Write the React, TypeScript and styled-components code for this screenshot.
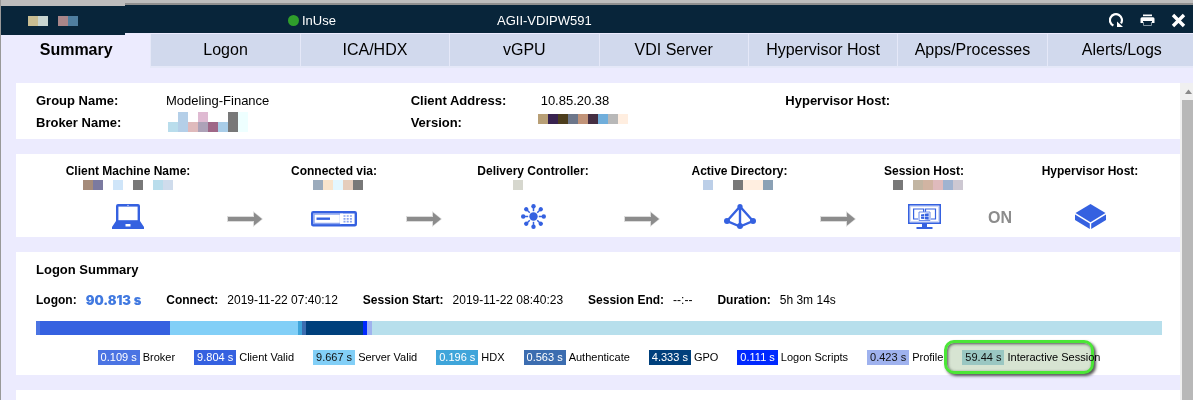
import React from "react";
import styled, { createGlobalStyle } from "styled-components";

const GlobalStyle = createGlobalStyle`
  * { box-sizing: border-box; }
  body {
    margin: 0;
    background: #ecebfe;
    color: #000;
    font-family: "Liberation Sans", Arial, sans-serif;
    font-size: 13px;
  }
`;

const Page = styled.div`
  display: flex;
  flex-direction: column;
  height: 100vh;
  overflow: hidden;
  border-left: 1px solid #999;
`;

const Header = styled.header`
  display: grid;
  flex: none;
  grid-template-columns: 125fr 163fr 209fr 696fr;
  height: 33px;
  margin-left: -1px;
  border-top: 3px solid #bdbdbd;
  background: #08253a;
  box-shadow: inset 0 2px #8f8f8f;
  color: #fff;
`;

const Brand = styled.div`
  position: relative;
  height: 32px;
  border-top: 3px solid #bdbdbd;
  background: #08253a;
`;

const HeaderCell = styled.div`
  display: flex;
  align-items: center;
  justify-content: flex-start;
  padding-top: 3px;
`;

const Status = styled(HeaderCell)`
  grid-column: 3;
  gap: 3px;
`;

const StatusDot = styled.span`
  width: 11px;
  height: 11px;
  border-radius: 50%;
  background: #2f9e2b;
`;

const Session = styled(HeaderCell)`
  justify-content: space-between;
  padding-right: 7px;
`;

const Actions = styled.div`
  display: flex;
  gap: 16px;
`;

const IconButton = styled.button`
  display: block;
  width: 15px;
  height: 15px;
  padding: 0;
  border: 0;
  background: none;
  color: #fff;
  cursor: pointer;
  svg { display: block; }
`;

const TabBar = styled.nav`
  display: grid;
  flex: none;
  grid-template-columns: repeat(8, 1fr);
  margin-right: -3px;
  padding-top: 1px;
  border-bottom: 2px solid #e5e8f8;
`;

const Tab = styled.button<{ $active?: boolean }>`
  height: ${(p) => (p.$active ? "34px" : "32px")};
  padding: 0 0 ${(p) => (p.$active ? "2px" : "0")};
  border: 0;
  border-left: 1px solid ${(p) => (p.$active ? "#ecebfe" : "#e5e8f8")};
  background: ${(p) => (p.$active ? "#ecebfe" : "#d1d9ed")};
  color: #000;
  font: ${(p) => (p.$active ? "bold" : "normal")} 16px/32px "Liberation Sans", Arial, sans-serif;
  margin-bottom: ${(p) => (p.$active ? "-2px" : "0")};
  cursor: pointer;
`;

const Body = styled.div`
  display: flex;
  flex: 1;
  min-height: 0;
  padding: 15px 0 0 15px;
`;

const Cards = styled.main`
  display: flex;
  flex: 1;
  flex-direction: column;
  gap: 15px;
  min-width: 0;
`;

const Card = styled.section`
  flex: none;
  background: #fff;
`;

const NextCard = styled(Card)`
  flex: 1 0 10px;
`;

const InfoCard = styled(Card)`
  display: grid;
  grid-template-columns: repeat(3, 1fr);
  padding: 7px 20px 5px;
`;

const InfoList = styled.dl`
  display: grid;
  grid-template-columns: 130px 1fr;
  grid-auto-rows: 22px;
  margin: 0;
  line-height: 22px;
`;

const Term = styled.dt`
  font-weight: bold;
`;

const Detail = styled.dd`
  position: relative;
  margin: 0;
`;

const Redaction = styled.span<{ $x: number; $y: number; $cols: number }>`
  position: absolute;
  left: ${(p) => p.$x}px;
  top: ${(p) => p.$y}px;
  display: grid;
  grid-template-columns: repeat(${(p) => p.$cols}, 10px);
  grid-auto-rows: 10px;
`;

const Block = styled.span<{ $color: string }>`
  background: ${(p) => p.$color};
`;

const PathCard = styled(Card)`
  display: grid;
  grid-template-columns: 162fr 71fr 108fr 71fr 148fr 69fr 127fr 69fr 104fr 48fr 132fr;
  padding: 9px 24px 8px 31px;
`;

const Node = styled.div`
  position: relative;
  display: flex;
  flex-direction: column;
  align-items: center;
  justify-content: space-between;
  height: 66px;
  font-size: 12px;
  font-weight: bold;
  line-height: 16px;
  white-space: nowrap;
  svg { display: block; }
`;

const Link = styled.div`
  display: flex;
  align-items: flex-end;
  justify-content: center;
  height: 66px;
  padding-bottom: 2px;
  color: #8c8c8c;
  font-size: 16px;
  font-weight: bold;
  line-height: 18px;
`;

const LogonCard = styled(Card)`
  padding: 8px 18px 10px 20px;
`;

const Title = styled.h2`
  margin: 0;
  font-size: 13px;
  line-height: 20px;
`;

const Times = styled.dl`
  display: flex;
  gap: 25px;
  margin: 10px 0 11px;
  font-size: 12px;
  line-height: 20px;
`;

const Time = styled.div`
  display: flex;
  gap: 9px;
`;

const Total = styled(Detail)`
  color: #4179e0;
  font-family: Inter, "Liberation Sans", sans-serif;
  font-size: 13px;
  font-weight: 900;
`;

const Bar = styled.div`
  display: flex;
  height: 14px;
`;

const Segment = styled.span<{ $size: number; $color: string }>`
  flex: ${(p) => p.$size} 0 0;
  background: ${(p) => p.$color};
`;

const Legend = styled.ul`
  display: flex;
  justify-content: center;
  gap: 19px;
  margin: 15px 0 0;
  padding: 0;
  list-style: none;
  font-size: 11px;
  line-height: 15px;
  white-space: nowrap;
`;

const LegendItem = styled.li`
  position: relative;
  display: flex;
  gap: 3px;
`;

const Chip = styled.span<{ $color: string; $dark?: boolean }>`
  padding: 0 3px;
  background: ${(p) => p.$color};
  color: ${(p) => (p.$dark ? "#111" : "#fff")};
`;

const Highlight = styled.span`
  position: absolute;
  top: -10px;
  right: 6px;
  bottom: -9px;
  left: -18px;
  border: 3px solid #4be637;
  border-radius: 10px;
  background: #d7e4d2;
  box-shadow: 2px 2px 3px #555, inset 1px 1px 3px #555;
  mix-blend-mode: multiply;
`;

const Scrollbar = styled.div`
  flex: none;
  width: 13px;
  padding-left: 2px;
  background: #f0f0f0;
  display: flex;
  flex-direction: column;
`;

const ScrollArrow = styled.svg`
  display: block;
  flex: none;
`;

const Thumb = styled.div`
  flex: 1;
  background: #b8b8b8;
`;

type Mask = { x: number; y: number; rows: string[][] };
const _ = "transparent";

function Redacted({ x, y, rows }: Mask) {
  return (
    <Redaction $x={x} $y={y} $cols={rows[0].length} aria-hidden="true">
      {rows.flat().map((c, i) => (
        <Block key={i} $color={c} />
      ))}
    </Redaction>
  );
}

const BLUE = "#3561e0";

const Refresh = () => (
  <svg width="15" height="15" viewBox="0 0 15 15" aria-hidden="true">
    <path d="M4.4 12.6A6 6 0 1 1 12 10.400" fill="none" stroke="currentColor" strokeWidth="2.2" />
    <path d="M8 8.6V14h6z" fill="currentColor" />
  </svg>
);

const Print = () => (
  <svg width="15" height="15" viewBox="0 0 15 15" aria-hidden="true">
    <path d="M3 1.500h9v1.700H3z" fill="currentColor" />
    <path d="M2 4.200h11q1.500 0 1.500 1.500V10H12V8H3v2H.5V5.700q0-1.500 1.500-1.500z" fill="currentColor" />
    <path d="M3.5 9v3.5h8V9" fill="none" stroke="#8496a3" strokeWidth="1" />
  </svg>
);

const Close = () => (
  <svg width="15" height="15" viewBox="0 0 15 15" aria-hidden="true">
    <path d="M2 2l11 11M13 2L2 13" stroke="currentColor" strokeWidth="3.4" />
  </svg>
);

const Arrow = () => (
  <svg width="36" height="16" viewBox="0 0 36 16" aria-hidden="true">
    <path d="M0 5h26V0l10 8-10 8v-5H0z" fill="#c4c4c4" opacity=".6" />
    <path d="M1 6h26V1.5L35 8l-8 6.5V10H1z" fill="#8c8c8c" />
  </svg>
);

const Laptop = () => (
  <svg width="32" height="25" viewBox="0 0 32 25" aria-hidden="true">
    <path d="M6 0h20q2 0 2 2v15l4 6v2H0v-2l4-6V2q0-2 2-2z" fill={BLUE} />
    <path d="M6.400 2.600h19.200v13.600H6.400z" fill="#fff" />
    <path d="M13.5 20h5v2.5h-5z" fill="#fff" />
    <path d="M15 1.4h2" stroke="#9fb2ee" />
  </svg>
);

const Gateway = () => (
  <svg width="46" height="25" viewBox="0 0 46 25" aria-hidden="true">
    <rect x="1.200" y="8.200" width="43.600" height="13" rx="1" fill="#fff" stroke={BLUE} strokeWidth="2.400" />
    <path d="M3 10h26.500v9.500H3z" fill="none" stroke="#8ba4ee" strokeWidth="1.400" />
    <path d="M29 9.600h3v10.300h-3z" fill="#fff" />
    <path d="M5.500 14.700h13.500" stroke={BLUE} strokeWidth="2.400" />
    <path d="M32.500 12h9M32.500 14.800h9M32.500 17.600h9" stroke="#8ba4ee" strokeWidth="1.700" strokeDasharray="2 1.200" />
  </svg>
);

const Controller = () => (
  <svg width="25" height="25" viewBox="0 0 25 25" aria-hidden="true">
    <circle cx="12.5" cy="12.5" r="4.200" fill={BLUE} />
    {[0, 45, 90, 135, 180, 225, 270, 315].map((a) => (
      <g key={a} transform={`rotate(${a} 12.5 12.5)`}>
        <circle cx="12.5" cy="2.200" r="2.200" fill={BLUE} />
        <path d="M12.5 2v5.200" stroke={BLUE} strokeWidth="1.500" />
      </g>
    ))}
  </svg>
);

const Directory = () => (
  <svg width="32" height="25" viewBox="0 0 32 25" aria-hidden="true">
    <path d="M16 2.5L3 17l13 5.5L29 17zM16 2.5v20" fill="none" stroke={BLUE} strokeWidth="2.400" />
    <g fill={BLUE}>
      <circle cx="16" cy="2.600" r="2.600" />
      <circle cx="3" cy="17" r="3" />
      <circle cx="29" cy="17" r="3" />
      <circle cx="16" cy="22" r="3" />
    </g>
  </svg>
);

const Host = () => (
  <svg width="33" height="25" viewBox="0 0 33 25" aria-hidden="true">
    <rect x=".8" y=".8" width="31.4" height="18.4" fill="#fff" stroke={BLUE} strokeWidth="1.6" />
    <rect x="2.5" y="2.5" width="28" height="15" fill="none" stroke="#c5d0f6" strokeWidth=".8" />
    <path d="M10 15H5.6V5h10v3M17.5 8V5h10v10H23" fill="none" stroke={BLUE} strokeWidth="1.2" />
    <path d="M11 8h11v8.5H11z" fill="#fff" stroke="#6d8cea" strokeWidth="1" />
    <path d="M13 10.4l3-.5v2.3h-3zM16.7 9.8l4-.6v3h-4zM13 12.8h3v2.3l-3-.4zM16.7 12.8h4v3l-4-.6z" fill={BLUE} />
    <path d="M14 19.5h5V23h5.500v2H8.500v-2H14z" fill={BLUE} />
  </svg>
);

const Hypervisor = () => (
  <svg width="31" height="25" viewBox="0 0 31 25" aria-hidden="true">
    <path d="M15.500 0L30.500 9 15.500 18.200 .5 9z" fill={BLUE} />
    <path d="M0 10.400l14.800 9V25L0 16zM31 10.400l-14.800 9V25L31 16z" fill={BLUE} />
  </svg>
);

const nodes = [
  { name: "Client Machine Name:", icon: <Laptop />, x: 36, cells: ["#a58b7a", "#7b7aa0", _, "#cfe5f9", _, "#787878", _, "#b9ddec", "#cfdcec"] },
  { name: "Connected via:", icon: <Gateway />, x: 33, cells: ["#9babbc", "#f8e4cc", "#e3f7ff", "#e5cdbc", "#787878"] },
  { name: "Delivery Controller:", icon: <Controller />, x: 54, cells: ["#d6d7ce"] },
  { name: "Active Directory:", icon: <Directory />, x: 27, cells: ["#bccfe8", _, _, "#787878", "#ffeee0", "#ffeee0", "#8ba1b5"] },
  { name: "Session Host:", icon: <Host />, x: 21, cells: ["#787878", _, "#c2b5a2", "#d1b4a2", "#dfbabc", "#a0b3d0", "#cdc8d2"] },
  { name: "Hypervisor Host:", icon: <Hypervisor />, x: 0, cells: [] as string[] },
];

const phases = [
  { time: "0.109 s", name: "Broker", color: "#4b74e3", size: 4 },
  { time: "9.804 s", name: "Client Valid", color: "#3561e0", size: 130 },
  { time: "9.667 s", name: "Server Valid", color: "#82cff7", size: 128, dark: true },
  { time: "0.196 s", name: "HDX", color: "#3fa5da", size: 4 },
  { time: "0.563 s", name: "Authenticate", color: "#3c6db0", size: 4 },
  { time: "4.333 s", name: "GPO", color: "#00407c", size: 57 },
  { time: "0.111 s", name: "Logon Scripts", color: "#0029ff", size: 4 },
  { time: "0.423 s", name: "Profile", color: "#9fb2ee", size: 5, dark: true },
  { time: "59.44 s", name: "Interactive Session", color: "#b7dfec", size: 790, dark: true, marked: true },
];

const times = [
  ["Connect:", "2019-11-22 07:40:12"],
  ["Session Start:", "2019-11-22 08:40:23"],
  ["Session End:", "--:--"],
  ["Duration:", "5h 3m 14s"],
];

const tabs = ["Summary", "Logon", "ICA/HDX", "vGPU", "VDI Server", "Hypervisor Host", "Apps/Processes", "Alerts/Logs"];

export default function App() {
  return (
    <>
      <GlobalStyle />
      <Page>
        <Header>
          <Brand>
            <Redacted x={28} y={10} rows={[["#c8bd92", "#c8d5d0", _, "#a98689", "#4f7e9f"]]} />
          </Brand>
          <Status>
            <StatusDot />
            InUse
          </Status>
          <Session>
            AGII-VDIPW591
            <Actions>
              <IconButton aria-label="Refresh"><Refresh /></IconButton>
              <IconButton aria-label="Print"><Print /></IconButton>
              <IconButton aria-label="Close"><Close /></IconButton>
            </Actions>
          </Session>
        </Header>
        <TabBar>
          {tabs.map((t, i) => (
            <Tab key={t} $active={i === 0}>{t}</Tab>
          ))}
        </TabBar>
        <Body>
          <Cards>
            <InfoCard>
              <InfoList>
                <Term>Group Name:</Term>
                <Detail>Modeling-Finance</Detail>
                <Term>Broker Name:</Term>
                <Detail>
                  <Redacted
                    x={2}
                    y={0}
                    rows={[
                      [_, "#b4cfe8", _, "#dfbad2", _, _, "#787878", "#eeffff"],
                      ["#b9ddec", "#b4cfe8", "#dfbabc", "#ada2b8", "#9f6787", "#a9cde8", "#787878", "#eeffff"],
                    ]}
                  />
                </Detail>
              </InfoList>
              <InfoList>
                <Term>Client Address:</Term>
                <Detail>10.85.20.38</Detail>
                <Term>Version:</Term>
                <Detail>
                  <Redacted
                    x={-3}
                    y={2}
                    rows={[["#b89f76", "#392350", "#4d3e1d", "#6d778b", "#c19378", "#452e42", "#70aedb", "#b8b8b8", "#ffeee0"]]}
                  />
                </Detail>
              </InfoList>
              <InfoList>
                <Term>Hypervisor Host:</Term>
                <Detail />
              </InfoList>
            </InfoCard>
            <PathCard>
              {nodes.map((n, i) => (
                <React.Fragment key={n.name}>
                  <Node>
                    {n.name}
                    {n.cells.length > 0 && <Redacted x={n.x} y={17} rows={[n.cells]} />}
                    {n.icon}
                  </Node>
                  {i < 4 && <Link><Arrow /></Link>}
                  {i === 4 && <Link>ON</Link>}
                </React.Fragment>
              ))}
            </PathCard>
            <LogonCard>
              <Title>Logon Summary</Title>
              <Times>
                <Time>
                  <Term>Logon:</Term>
                  <Total>90.813 s</Total>
                </Time>
                {times.map(([k, v]) => (
                  <Time key={k}>
                    <Term>{k}</Term>
                    <Detail>{v}</Detail>
                  </Time>
                ))}
              </Times>
              <Bar>
                {phases.map((p) => (
                  <Segment key={p.name} $size={p.size} $color={p.color} />
                ))}
              </Bar>
              <Legend>
                {phases.map((p) => (
                  <LegendItem key={p.name}>
                    <Chip $color={p.color} $dark={p.dark}>{p.time}</Chip>
                    {p.name}
                    {p.marked && <Highlight />}
                  </LegendItem>
                ))}
              </Legend>
            </LogonCard>
            <NextCard />
          </Cards>
          <Scrollbar aria-hidden="true">
            <ScrollArrow width="11" height="17" viewBox="0 0 11 17">
              <path d="M3 11l3.500-4.500L10 11z" fill="#8a8a8a" />
            </ScrollArrow>
            <Thumb />
          </Scrollbar>
        </Body>
      </Page>
    </>
  );
}
